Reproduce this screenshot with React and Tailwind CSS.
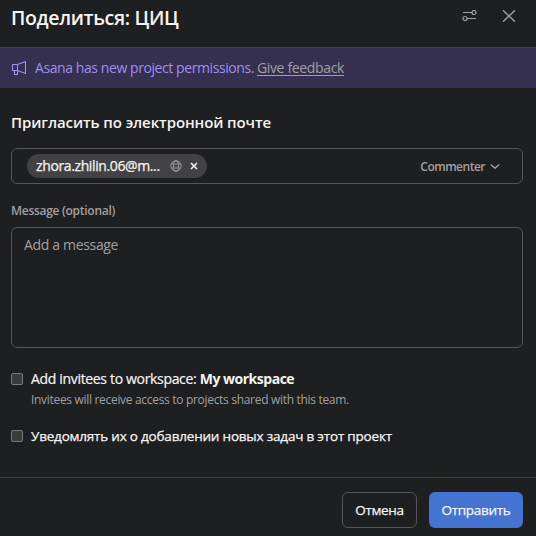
function Megaphone() {
  return (
    <svg width="16" height="16" viewBox="0 0 16 16" fill="none" stroke="#9f8fef" strokeWidth="1.1" strokeLinejoin="round" className="shrink-0">
      <path d="M1.5 4.5H6.5V10.5H1.5ZM6.5 4.5L14.5 1.5V13.5L6.5 10.5M3.5 10.5V14.5H6.5V10.5" />
    </svg>
  );
}

function Sliders() {
  return (
    <svg width="16" height="12" viewBox="0 0 16 12" fill="none" stroke="#a2a0a2" strokeWidth="1.2">
      <path d="M1 2.5H10M5 8.5H14" />
      <circle cx="12" cy="2.5" r="2" />
      <circle cx="3" cy="8.5" r="2" />
    </svg>
  );
}

function Globe() {
  return (
    <svg width="12" height="12" viewBox="0 0 12 12" fill="none" stroke="#a2a0a2" strokeWidth="0.9" className="shrink-0">
      <circle cx="6" cy="6" r="5.2" />
      <ellipse cx="6" cy="6" rx="2.5" ry="5.2" />
      <path d="M1.3 4H10.7M1.3 8H10.7" />
    </svg>
  );
}

function Checkbox() {
  return <span className="h-3 w-3 shrink-0 rounded-[2px] border border-[#7b7b7c] bg-[#3b3b3c]" />;
}

export default function App() {
  return (
    <div className="flex h-[536px] w-[536px] flex-col overflow-hidden whitespace-nowrap bg-[#1e1f21] font-['Open_Sans','Noto_Sans',sans-serif] text-[14px] leading-5 text-[#f5f4f3]">
      <header className="flex h-[47px] shrink-0 items-start justify-between pl-[11px] pr-[20px]">
        <h1 className="pt-[4px] text-[19.5px] font-semibold leading-7 tracking-[-0.35px]">Поделиться: ЦИЦ</h1>
        <div className="flex items-start gap-6 pt-[10px]">
          <button><Sliders /></button>
          <button>
            <svg width="14" height="12" viewBox="0 0 14 12" fill="none" stroke="#a2a0a2" strokeWidth="1.4" strokeLinecap="round">
              <path d="M1.5 0.7L12.5 11.3M12.5 0.7L1.5 11.3" />
            </svg>
          </button>
        </div>
      </header>

      <div className="flex h-[41px] shrink-0 items-center border-t border-[#424244] bg-[#352f50] pl-[11px] text-[14px] text-[#9f8fef]">
        <Megaphone />
        <span className="ml-2 tracking-[-0.42px]">Asana has new project permissions.</span>
        <a className="ml-[3px] tracking-[-0.35px] text-[#a2a0a2] underline underline-offset-2">Give feedback</a>
      </div>

      <main className="flex grow flex-col pl-[11px] pr-[13px]">
        <h2 className="mt-[24px] text-[15px] font-semibold leading-5 tracking-[-0.1px]">Пригласить по электронной почте</h2>

        <div className="mt-4 flex h-9 items-center justify-between rounded-md border border-[#565557] pl-[15px] pr-[22px]">
          <div className="flex h-6 w-[180px] items-center rounded-full bg-[#424244] pl-[9px]">
            <span className="w-[134px] text-[14px] font-medium tracking-[-0.38px] [-webkit-text-stroke:0.25px]">zhora.zhilin.06@m...</span>
            <Globe />
            <svg width="8" height="8" viewBox="0 0 8 8" stroke="#f5f4f3" strokeWidth="1.6" className="ml-2">
              <path d="M1 1L7 7M7 1L1 7" />
            </svg>
          </div>
          <div className="flex items-center gap-[5px] pt-px text-[12px] font-semibold text-[#a2a0a2]">
            <span className="tracking-[-0.5px]">Commenter</span>
            <svg width="10" height="6" viewBox="0 0 10 6" fill="none" stroke="#a2a0a2" strokeWidth="1.5" strokeLinecap="round" strokeLinejoin="round">
              <path d="M1.3 1L5 4.3L8.7 1" />
            </svg>
          </div>
        </div>

        <label className="mt-[17px] text-[12px] font-semibold leading-5 tracking-[-0.28px] text-[#a2a0a2]">Message (optional)</label>
        <div className="mt-[6px] h-[121px] rounded-md border border-[#565557] px-3 pt-[7px] text-[14px] tracking-[-0.33px] text-[#a2a0a2]">Add a message</div>

        <div className="mt-[21px] flex h-5 items-center gap-2">
          <Checkbox />
          <span className="text-[14px]"><span className="tracking-[-0.33px] [-webkit-text-stroke:0.2px]">Add invitees to workspace: </span><b className="font-bold tracking-[-0.48px]">My workspace</b></span>
        </div>
        <p className="ml-5 mt-px text-[12px] leading-5 tracking-[-0.31px] text-[#a2a0a2]">Invitees will receive access to projects shared with this team.</p>
        <div className="mt-4 flex h-5 items-center gap-2">
          <Checkbox />
          <span className="text-[13.5px] font-medium tracking-[-0.2px] [-webkit-text-stroke:0.25px]">Уведомлять их о добавлении новых задач в этот проект</span>
        </div>
      </main>

      <footer className="flex h-[59px] shrink-0 items-start justify-end gap-3 border-t border-[#424244] pr-[13px] pt-[14px] text-[13.5px] font-medium [-webkit-text-stroke:0.25px]">
        <button className="h-9 w-[75px] rounded-md border border-[#565557] tracking-[-0.3px]">Отмена</button>
        <button className="h-9 w-[94px] rounded-md bg-[#4573d2] tracking-[-0.3px]">Отправить</button>
      </footer>
    </div>
  );
}
